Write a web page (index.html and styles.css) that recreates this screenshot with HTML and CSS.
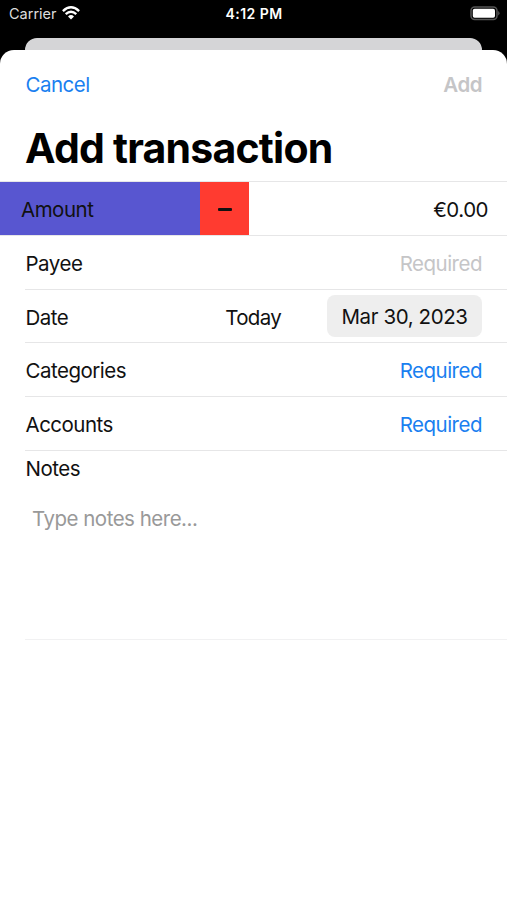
FILE: index.html
```html
<!DOCTYPE html>
<html lang="en">
<head>
<meta charset="utf-8">
<title>Add transaction</title>
<link rel="stylesheet" href="styles.css">
</head>
<body>
<div class="screen">
  <header class="status">
    <div class="carrier"><span>Carrier</span>
      <svg class="wifi" width="18" height="14" viewBox="0 0 18 14" fill="none" stroke="#fff" stroke-width="2.4"><path d="M.9 5.1Q9-2.4 17.1 5.1M3.7 8.2Q9 3.5 14.3 8.2"/><path d="M6 10.4Q9 7.6 12 10.4L9 13.4Z" fill="#fff" stroke="none"/></svg>
    </div>
    <time>4:12 PM</time>
    <svg class="battery" width="30" height="15" viewBox="0 0 30 15"><rect x="1" y="1" width="26" height="12.5" rx="3.7" fill="none" stroke="#555" stroke-width="1.5"/><rect x="2.8" y="2.8" width="22.2" height="9" rx="1.8" fill="#fff"/><path d="M28.3 5Q30.6 7.2 28.3 9.5Z" fill="#666"/></svg>
  </header>
  <div class="behind"></div>
  <main class="sheet">
    <nav class="bar"><a class="cancel">Cancel</a><span class="add">Add</span></nav>
    <h1>Add transaction</h1>
    <section class="form">
      <div class="amount"><span class="amount-label">Amount</span><span class="sign"><i></i></span><span class="value">€0.00</span></div>
      <div class="row"><span>Payee</span><span class="placeholder">Required</span></div>
      <div class="row"><span>Date</span><span class="today">Today</span><span class="date">Mar 30, 2023</span></div>
      <div class="row"><span>Categories</span><a class="link">Required</a></div>
      <div class="row"><span>Accounts</span><a class="link">Required</a></div>
      <div class="notes"><span>Notes</span><p>Type notes here...</p></div>
    </section>
  </main>
</div>
</body>
</html>
```
FILE: styles.css
```css
* { box-sizing: border-box; }
body { margin: 0; background: #000; }
.screen {
  width: 507px;
  height: 900px;
  overflow: hidden;
  display: flex;
  flex-direction: column;
  background: #000;
  color: #111;
  font: 20.5px/26px Inter, "Liberation Sans", sans-serif;
  letter-spacing: -0.5px;
}
.status {
  height: 38px;
  flex: none;
  display: grid;
  grid-template-columns: 1fr auto 1fr;
  align-items: start;
  padding: 5px 8px 0 9px;
  color: #fff;
  font-size: 14.5px;
  line-height: 18px;
}
.carrier { display: flex; gap: 5px; color: #ddd; letter-spacing: 0; }
.wifi { margin-top: 1px; }
.status time { font-weight: 600; font-size: 14px; letter-spacing: 0.45px; }
.battery { justify-self: end; margin: 1px -1px 0 0; }
.behind { height: 12px; flex: none; margin: 0 25px; background: #d5d5d7; border-radius: 12px 12px 0 0; }
.sheet { flex: 1; background: #fff; border-radius: 14px 14px 0 0; }
.bar { height: 70px; padding: 0 25px; display: flex; justify-content: space-between; align-items: center; }
.cancel, .link { color: #1a7ff0; }
.cancel { padding-left: 0.5px; }
.add { color: #c5c5c7; font-weight: 600; }
h1 { margin: 0; height: 61px; padding: 4px 25px 0; color: #000; font-size: 41px; line-height: 48px; font-weight: 700; letter-spacing: -0.78px; }
.amount { height: 55px; display: flex; align-items: stretch; line-height: 54px; border-top: 1px solid #e6e6e7; border-bottom: 1px solid #e6e6e7; }
.amount-label, .value { padding-top: 1px; line-height: 52px; }
.amount-label { width: 200px; padding: 1px 0 0 21px; background: #5856d0; }
.sign { width: 49px; padding-top: 2px; display: grid; place-items: center; background: #ff3b30; }
.sign i { width: 14px; height: 3px; border-radius: 1px; background: #111; }
.amount-label, .value { line-height: 54px; }
.value { margin-left: auto; padding-right: 19px; }
.row { height: 53.7px; margin-left: 25px; padding: 3px 25px 0 0.5px; display: flex; align-items: center; justify-content: space-between; border-bottom: 1px solid #e6e6e7; }
.today { margin-left: auto; margin-right: 46px; letter-spacing: -0.7px; }
.placeholder { color: #c5c5c7; }
.date { width: 155px; height: 42px; margin-top: -3px; padding-top: 1px; border-radius: 8px; background: #eee; line-height: 42px; text-align: center; letter-spacing: -0.4px; }
.notes { height: 189px; margin-left: 25px; padding: 5px 0 0 0.5px; border-bottom: 1px solid #f1f1f2; }
.notes p { margin: 24px 0 0 6.5px; color: #999; }
```
